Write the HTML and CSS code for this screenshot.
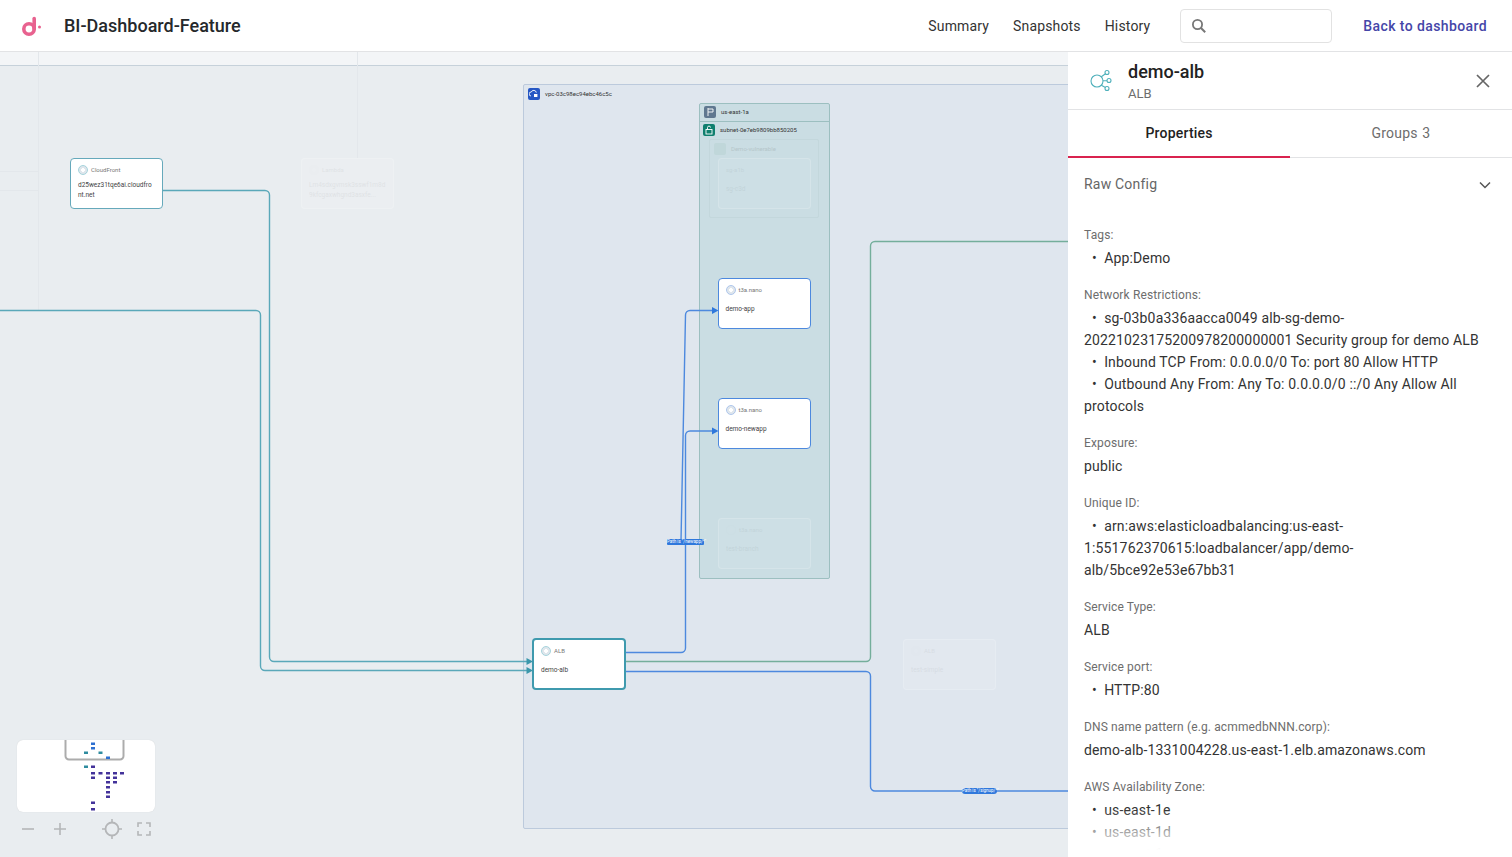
FILE: index.html
```html
<!DOCTYPE html>
<html lang="en">
<head>
<meta charset="utf-8">
<title>BI-Dashboard-Feature</title>
<link rel="stylesheet" href="styles.css">
</head>
<body>
<header class="topbar">
  <svg class="logo" width="24" height="24" viewBox="0 0 24 24"><circle cx="9" cy="15" r="5.2" fill="none" stroke="#e8628f" stroke-width="3.6"/><path d="M14.2 4.500V15" fill="none" stroke="#e8628f" stroke-width="3.6" stroke-linecap="round"/><circle cx="19.500" cy="13" r="1.500" fill="#e8628f"/></svg>
  <h1 class="app-title">BI-Dashboard-Feature</h1>
  <nav class="nav">
    <a>Summary</a>
    <a>Snapshots</a>
    <a>History</a>
  </nav>
  <div class="search">
    <svg width="16" height="16" viewBox="0 0 16 16"><circle cx="6.500" cy="6.500" r="4.600" fill="none" stroke="#777" stroke-width="1.800"/><path d="M10 10l4.200 4.200" stroke="#777" stroke-width="2"/></svg>
  </div>
  <a class="back">Back to dashboard</a>
</header>

<div class="main">
  <section class="canvas">
    <div class="band"></div>
    <div class="zone vpc">
      <span class="zone-icon blue"><svg width="10" height="10" viewBox="0 0 10 10"><path d="M2 7a2 2 0 0 1 .3-4 2.600 2.600 0 0 1 5 .6" fill="none" stroke="#fff" stroke-width=".9"/><rect x="5" y="5" width="3.400" height="3" fill="#fff"/></svg></span>
      <span class="zone-name">vpc-03c98ec94ebc46c5c</span>
    </div>
    <div class="zone az">
      <span class="zone-icon slate"><svg width="10" height="10" viewBox="0 0 10 10"><path d="M3 1v8M3 2h5v3H3" fill="none" stroke="#fff" stroke-width=".9"/></svg></span>
      <span class="zone-name">us-east-1a</span>
    </div>
    <div class="zone subnet">
      <span class="zone-icon green"><svg width="10" height="10" viewBox="0 0 10 10"><rect x="2" y="4.500" width="6" height="4.500" fill="none" stroke="#fff" stroke-width=".9"/><path d="M3.500 4.500V2.600a1.500 1.500 0 0 1 3 0" fill="none" stroke="#fff" stroke-width=".9"/></svg></span>
      <span class="zone-name">subnet-0e7eb9809bb850205</span>
    </div>
    <div class="zone group">
      <span class="zone-icon ghost"></span>
      <span class="zone-name">Demo-vulnerable</span>
    </div>

    <svg class="edges" width="1068" height="805" viewBox="0 52 1068 805">
      <g fill="none" stroke="#e3e7eb">
        <path d="M38.500 52V310"/>
        <path d="M357.500 52V158"/>
        <path d="M0 171.500H38M0 190.500H38"/>
      </g>
      <g fill="none" stroke="#74ae9b" stroke-width="1.400">
        <path d="M626 661.500H866a4.500 4.500 0 0 0 4.500-4.500V246a4.500 4.500 0 0 1 4.500-4.500H1068"/>
      </g>
      <g fill="none" stroke="#5aa8b9" stroke-width="1.400">
        <path d="M163 190.500H265a4.500 4.500 0 0 1 4.500 4.500V657a4.500 4.500 0 0 0 4.500 4.500H527"/>
        <path d="M0 310.500H256a4.500 4.500 0 0 1 4.500 4.500V666a4.500 4.500 0 0 0 4.500 4.500H527"/>
      </g>
      <g fill="#3b97ab">
        <path d="M526.500 658l6.500 3.500-6.500 3.500z"/>
        <path d="M526.500 667l6.500 3.500-6.500 3.500z"/>
      </g>
      <g fill="none" stroke="#4d89de" stroke-width="1.400">
        <path d="M626 652.500H681a4.500 4.500 0 0 0 4.500-4.500V435.500a4.500 4.500 0 0 1 4.500-4.500H712"/>
        <path d="M681 541L685.500 315a4.500 4.500 0 0 1 4.500-4.500H712"/>
        <path d="M626 671.500H866a4.500 4.500 0 0 1 4.500 4.500V786.500a4.500 4.500 0 0 0 4.500 4.500H1068"/>
      </g>
      <g fill="#2f78dc">
        <path d="M712 307l6.500 3.500-6.500 3.500z"/>
        <path d="M712 427.500l6.500 3.500-6.500 3.500z"/>
      </g>
    </svg>

    <div class="edge-label path-newapp">Path is "/newapp/*"</div>
    <div class="edge-label path-signup">Path is "/signup/*"</div>

    <div class="node cloudfront">
      <div class="node-kind"><span class="node-icon teal"></span>CloudFront</div>
      <div class="node-name wrap">d25wez31tqe6ai.cloudfront.net</div>
    </div>
    <div class="node faded lambda">
      <div class="node-kind"><span class="node-icon"></span>Lambda</div>
      <div class="node-name wrap">Lm4sdxgvmsk3sswf1m8d<br>9kfcgaxwhgnd3asxfe...</div>
    </div>
    <div class="node faded inner-a">
      <div class="node-kind">sg-a1b</div>
      <div class="node-name">sg-c3d</div>
    </div>
    <div class="node app">
      <div class="node-kind"><span class="node-icon blue"></span>t3a.nano</div>
      <div class="node-name">demo-app</div>
    </div>
    <div class="node newapp">
      <div class="node-kind"><span class="node-icon blue"></span>t3a.nano</div>
      <div class="node-name">demo-newapp</div>
    </div>
    <div class="node faded inner-b">
      <div class="node-kind"><span class="node-icon"></span>t3a.nano</div>
      <div class="node-name">test-branch</div>
    </div>
    <div class="node alb">
      <div class="node-kind"><span class="node-icon teal"></span>ALB</div>
      <div class="node-name">demo-alb</div>
    </div>
    <div class="node faded alb2">
      <div class="node-kind"><span class="node-icon"></span>ALB</div>
      <div class="node-name">test-simple</div>
    </div>

    <div class="minimap">
      <svg width="138" height="72" viewBox="17 740 138 72">
        <path d="M65.500 738V756a3.500 3.500 0 0 0 3.500 3.500H120a3.500 3.500 0 0 0 3.500-3.500V738" fill="none" stroke="#acacac" stroke-width="2"/>
        <g fill="#2d6fd0">
          <rect x="91" y="742.500" width="4" height="2.500"/><rect x="91" y="747" width="4" height="2.500"/><rect x="106" y="756.500" width="4" height="2.500"/>
        </g>
        <g fill="#2f8c9f">
          <rect x="84" y="751.500" width="4" height="2.500"/><rect x="98.500" y="751.500" width="4" height="2.500"/><rect x="84" y="765.500" width="4" height="2.500"/>
        </g>
        <g fill="#43329a">
          <rect x="91" y="765.500" width="4" height="2.500"/>
          <rect x="91" y="772" width="4" height="2.500"/><rect x="98.500" y="772" width="4" height="2.500"/><rect x="106" y="772" width="4" height="2.500"/><rect x="113" y="772" width="4" height="2.500"/><rect x="120" y="772" width="4" height="2.500"/>
          <rect x="91" y="776.500" width="4" height="2.500"/><rect x="106" y="776.500" width="4" height="2.500"/><rect x="113" y="776.500" width="4" height="2.500"/>
          <rect x="106" y="781" width="4" height="2.500"/><rect x="113" y="781" width="4" height="2.500"/>
          <rect x="106" y="786" width="4" height="2.500"/><rect x="106" y="791" width="4" height="2.500"/><rect x="106" y="795.500" width="4" height="2.500"/>
          <rect x="91" y="801.500" width="4" height="2.500"/><rect x="91" y="808" width="4" height="2.500"/>
        </g>
      </svg>
    </div>
    <div class="map-tools">
      <svg class="tool-minus" width="14" height="14" viewBox="0 0 14 14"><path d="M1 7H13" stroke="#b4b6b8" stroke-width="1.600"/></svg>
      <svg class="tool-plus" width="14" height="14" viewBox="0 0 14 14"><path d="M1 7H13M7 1V13" stroke="#b4b6b8" stroke-width="1.600"/></svg>
      <svg class="tool-center" width="20" height="20" viewBox="0 0 20 20"><circle cx="10" cy="10" r="6.500" fill="none" stroke="#b4b6b8" stroke-width="1.800"/><path d="M10 0V3.500M10 16.500V20M0 10H3.500M16.500 10H20" stroke="#b4b6b8" stroke-width="1.600"/></svg>
      <svg class="tool-full" width="14" height="14" viewBox="0 0 14 14"><path d="M1 5V1H5M9 1H13V5M13 9V13H9M5 13H1V9" fill="none" stroke="#b4b6b8" stroke-width="1.600"/></svg>
    </div>
  </section>

  <aside class="panel">
    <div class="panel-head">
      <svg class="panel-icon" width="24" height="24" viewBox="0 0 24 24" fill="none" stroke="#4fb0bb" stroke-width="1.100"><circle cx="8" cy="12" r="6"/><circle cx="18" cy="3.500" r="2"/><circle cx="20" cy="11.500" r="2"/><circle cx="18" cy="19.500" r="2"/><path d="M12.300 7.800l4.200-3M14 11.700h4M12.300 16.200l4.200 2.300"/></svg>
      <div class="panel-title">
        <div class="resource-name">demo-alb</div>
        <div class="resource-type">ALB</div>
      </div>
      <svg class="close" width="16" height="16" viewBox="0 0 16 16"><path d="M2 2L14 14M14 2L2 14" stroke="#666" stroke-width="1.700"/></svg>
    </div>
    <div class="tabs">
      <div class="tab active">Properties</div>
      <div class="tab">Groups&nbsp;<span class="count">3</span></div>
    </div>
    <div class="panel-body">
      <div class="raw-config">
        <span>Raw Config</span>
        <svg width="12" height="8" viewBox="0 0 12 8"><path d="M1 1.500L6 6.500L11 1.500" fill="none" stroke="#555" stroke-width="1.500"/></svg>
      </div>

      <div class="prop">
        <div class="prop-label">Tags:</div>
        <div class="prop-value item">•&ensp;App:Demo</div>
      </div>
      <div class="prop">
        <div class="prop-label">Network Restrictions:</div>
        <div class="prop-value item">•&ensp;sg-03b0a336aacca0049 alb-sg-demo-20221023175200978200000001 Security group for demo ALB</div>
        <div class="prop-value item">•&ensp;Inbound TCP From: 0.0.0.0/0 To: port 80 Allow HTTP</div>
        <div class="prop-value item">•&ensp;Outbound Any From: Any To: 0.0.0.0/0 ::/0 Any Allow All protocols</div>
      </div>
      <div class="prop">
        <div class="prop-label">Exposure:</div>
        <div class="prop-value">public</div>
      </div>
      <div class="prop">
        <div class="prop-label">Unique ID:</div>
        <div class="prop-value item">•&ensp;arn:aws:elasticloadbalancing:us-east-1:551762370615:loadbalancer/app/demo-alb/5bce92e53e67bb31</div>
      </div>
      <div class="prop">
        <div class="prop-label">Service Type:</div>
        <div class="prop-value">ALB</div>
      </div>
      <div class="prop">
        <div class="prop-label">Service port:</div>
        <div class="prop-value item">•&ensp;HTTP:80</div>
      </div>
      <div class="prop">
        <div class="prop-label">DNS name pattern (e.g. acmmedbNNN.corp):</div>
        <div class="prop-value">demo-alb-1331004228.us-east-1.elb.amazonaws.com</div>
      </div>
      <div class="prop">
        <div class="prop-label">AWS Availability Zone:</div>
        <div class="prop-value item">•&ensp;us-east-1e</div>
        <div class="prop-value item">•&ensp;us-east-1d</div>
        <div class="prop-value item">•&ensp;us-east-1c</div>
      </div>
    </div>
    <div class="fade"></div>
  </aside>
</div>
</body>
</html>
```

FILE: styles.css
```css
* { box-sizing: border-box; margin: 0; padding: 0; }
html, body { height: 100%; overflow: hidden; }
body { font-family: Roboto, "Liberation Sans", sans-serif; color: #222; background: #fff; display: flex; flex-direction: column; }

/* top bar */
.topbar { height: 52px; flex: none; display: flex; align-items: center; padding: 0 25px 0 20px; border-bottom: 1px solid #e2e3e5; background: #fff; }
.logo { flex: none; margin-top: 1px; }
.app-title { margin-left: 20px; font-size: 18px; font-weight: 500; color: #25282b; }
.nav { margin-left: auto; display: flex; gap: 24px; font-size: 14px; color: #333; letter-spacing: .15px; }
.search { width: 152px; height: 34px; margin: 0 31px 0 30px; padding: 0 10px; display: flex; align-items: center; border: 1px solid #e2e2e2; border-radius: 4px; }
.back { font-size: 14px; font-weight: 500; color: #4546a8; letter-spacing: .4px; }

.main { flex: 1; min-height: 0; display: flex; }

/* diagram */
.canvas { flex: 1; min-width: 0; position: relative; overflow: hidden; background: #e9edf0; }
.band { height: 14px; background: #f3f5f7; border-bottom: 1px solid #c6d1da; }
.edges { position: absolute; left: 0; top: 0; }

.zone { position: absolute; display: flex; align-items: flex-start; gap: 5px; font-size: 6px; color: #333; }
.zone-name { line-height: 12px; }
.zone-icon { width: 12px; height: 12px; border-radius: 2px; display: flex; align-items: center; justify-content: center; flex: none; }
.zone-icon.blue { background: #2557c4; }
.zone-icon.slate { background: #607890; }
.zone-icon.green { background: #0f7f6e; }
.zone-icon.ghost { background: #c0d7da; }
.vpc { left: 523px; top: 31.500px; width: 700px; height: 745px; padding: 3px 4px; background: #dfe6ee; border: 1px solid #bccadc; border-radius: 2px; }
.az { left: 699px; top: 51px; width: 131px; height: 476px; padding: 2px 4px; background: #cadde3; border: 1px solid #9cbfc0; border-radius: 2px; }
.subnet { left: 699px; top: 69px; width: 131px; height: 20px; padding: 2px 4px; border-top: 1px solid #9cbfc0; }
.group { left: 709px; top: 87px; width: 110px; height: 79px; padding: 3px 4px; color: #b5c6ca; border: 1px solid #c3d7dc; border-radius: 2px; }

.node { position: absolute; width: 93px; height: 51px; padding: 4px 7px; background: #fff; border: 1.500px solid #66a9bb; border-radius: 4px; font-size: 6.500px; }
.node-kind { display: flex; align-items: center; gap: 3px; height: 13px; color: #777; font-size: 6px; }
.node-name { margin-top: 8px; color: #444; line-height: 10px; }
.node-name.wrap { margin-top: 4px; word-break: break-all; }
.node-icon { width: 10px; height: 10px; border-radius: 50%; border: 1px solid #c5cbd0; background: radial-gradient(circle, #fff 30%, #dfe6ec 32%); flex: none; }
.node-icon.teal { border-color: #a5d3dc; }
.node-icon.blue { border-color: #adc6ec; }
.cloudfront { left: 70px; top: 106px; }
.app { left: 717.500px; top: 226px; border-color: #4d89de; }
.newapp { left: 717.500px; top: 346px; border-color: #4d89de; }
.alb { left: 532px; top: 586px; height: 52px; width: 94px; border: 2px solid #3f9aae; }
.faded { background: transparent; border: 1px solid rgba(255, 255, 255, .16); color: transparent; }
.faded .node-kind, .faded .node-name { color: #000; opacity: .05; }
.faded .node-icon { opacity: .4; }
.lambda { left: 301px; top: 106px; background: rgba(255, 255, 255, .1); }
.inner-a { left: 718px; top: 106px; background: rgba(255, 255, 255, .07); }
.inner-b { left: 718px; top: 466px; background: rgba(255, 255, 255, .07); }
.alb2 { left: 903px; top: 587px; background: rgba(255, 255, 255, .1); }

.edge-label { position: absolute; height: 6px; line-height: 6px; font-size: 4.500px; color: #fff; text-align: center; background: #2f78dc; white-space: nowrap; }
.path-newapp { left: 667px; top: 487px; width: 37px; border-radius: 1px; }
.path-signup { left: 962px; top: 736px; width: 35px; border-radius: 3px; }

.minimap { position: absolute; left: 17px; top: 688px; width: 138px; height: 72px; background: #fff; border-radius: 6px; overflow: hidden; box-shadow: 0 0 1px rgba(0, 0, 0, .15); }
.minimap svg { display: block; }
.map-tools { position: absolute; left: 21px; top: 767px; width: 130px; height: 20px; display: flex; align-items: center; }
.tool-plus { margin-left: 18px; }
.tool-center { margin-left: 35px; }
.tool-full { margin-left: 15px; }

/* side panel */
.panel { width: 444px; flex: none; position: relative; display: flex; flex-direction: column; overflow: hidden; background: #fff; }
.panel-head { height: 58px; flex: none; display: flex; align-items: flex-start; padding: 9px 21px 0 21px; border-bottom: 1px solid #e2e3e5; }
.panel-icon { margin-top: 8px; flex: none; }
.panel-title { margin-left: 15px; flex: 1; }
.resource-name { font-size: 18px; font-weight: 500; line-height: 21px; color: #222; }
.resource-type { margin-top: 4px; font-size: 13px; line-height: 16px; color: #6d6d6d; }
.close { margin-top: 12px; flex: none; }

.tabs { height: 48px; flex: none; display: flex; border-bottom: 1px solid #e2e3e5; }
.tab { width: 222px; margin-bottom: -1px; display: flex; align-items: center; justify-content: center; font-size: 14px; color: #6d6d6d; letter-spacing: .2px; border-bottom: 2px solid transparent; white-space: pre; }
.tab.active { font-weight: 500; color: #222; border-bottom-color: #d9234f; }
.count { margin-left: 1px; }

.panel-body { flex: 1; min-height: 0; overflow: hidden; padding: 0 16px; }
.raw-config { height: 52px; display: flex; align-items: center; justify-content: space-between; padding-right: 5px; font-size: 14px; color: #666; letter-spacing: .2px; }
.raw-config svg { margin-top: 2px; }
.prop { margin-top: 15px; }
.raw-config + .prop { margin-top: 14px; }
.prop-label { font-size: 12px; line-height: 22px; margin-bottom: 1px; color: #6d6d6d; letter-spacing: .13px; }
.prop-value { font-size: 14px; line-height: 22px; color: #333; letter-spacing: .15px; }
.prop-value.item { text-indent: 8px; }
.fade { position: absolute; left: 0; right: 0; bottom: 0; height: 48px; background: linear-gradient(rgba(255, 255, 255, 0), #fff 85%); }
```
